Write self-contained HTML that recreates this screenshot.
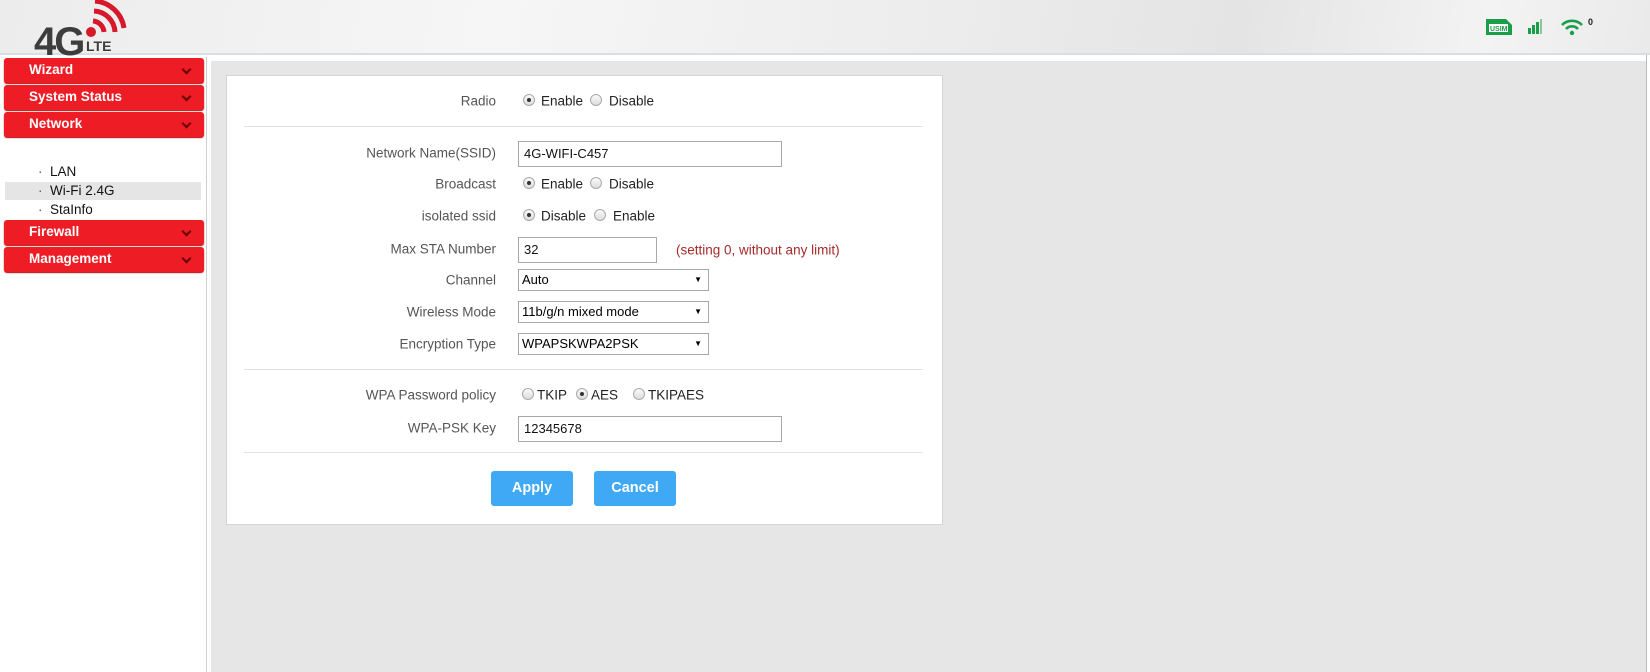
<!DOCTYPE html>
<html><head><meta charset="utf-8"><style>
*{box-sizing:border-box;margin:0;padding:0}
body{width:1650px;height:672px;overflow:hidden;background:#fff;font-family:"Liberation Sans",Arial,sans-serif;position:relative}
.hdr{position:absolute;left:0;top:0;width:1650px;height:55px;background:linear-gradient(100deg,#ececec 0%,#f6f6f6 30%,#ededed 55%,#e4e4e4 75%,#f3f3f3 90%,#eaeaea 100%);border-bottom:2px solid #d6dfe3}
.side{position:absolute;left:0;top:57px;width:207px;height:615px;border-right:1px solid #cfcfcf;background:#fff}
.btn{position:absolute;left:4px;width:200px;height:25px;background:#ee1c25;border-radius:3px;color:#fff;font-weight:bold;font-size:13.5px;line-height:24px;padding-left:25px;box-shadow:0 1px 1px #b00}
.btn:after{content:"";position:absolute;right:14px;top:8px;width:5px;height:5px;border-right:2px solid #600;border-bottom:2px solid #600;transform:rotate(45deg)}
.sub{position:absolute;left:5px;width:196px;height:18px;font-size:13.5px;color:#111;line-height:18px;padding-left:45px}
.sub:before{content:"·";position:absolute;left:33px;color:#555}
.main{position:absolute;left:211px;top:61px;width:1435px;height:611px;background:#e6e6e6}
.vline{position:absolute;left:1646px;top:55px;width:1px;height:617px;background:#bbb}
.card{position:absolute;left:226px;top:75px;width:717px;height:450px;background:#fff;border:1px solid #d5d5d5}
.lbl{position:absolute;right:1154px;font-size:13.5px;color:#555;white-space:nowrap;transform:translateY(-50%)}
.sep{position:absolute;left:244px;width:679px;height:1px;background:#e2e2e2}
.r{position:absolute;width:12px;height:12px;border-radius:50%;border:1px solid #aaa;background:linear-gradient(#fafafa,#ddd);transform:translate(-50%,-50%)}
.r.on:after{content:"";position:absolute;left:3px;top:3px;width:4px;height:4px;border-radius:50%;background:#333}
.t{position:absolute;font-size:13.5px;color:#222;transform:translateY(-50%);white-space:nowrap}
.inp{position:absolute;left:518px;height:26px;border:1px solid #a9a9a9;font-size:13px;line-height:24px;padding-left:5px;color:#111;background:#fff}
.sel{position:absolute;left:518px;width:191px;height:22px;border:1px solid #a9a9a9;font-size:13px;line-height:20px;padding-left:3px;color:#000;background:#fff}
.sel:after{content:"▼";position:absolute;right:6px;top:0;font-size:8px}
.ab{position:absolute;top:471px;width:82px;height:35px;background:#3fa9f5;border-radius:3px;color:#fff;font-weight:bold;font-size:14.5px;text-align:center;line-height:35px}
</style></head><body>
<div class="hdr">
<svg style="position:absolute;left:34px;top:0" width="100" height="56" viewBox="0 0 100 56">
<text x="0" y="55" font-family="Liberation Sans" font-weight="bold" font-size="40" fill="#3d3d3d" letter-spacing="-2">4G</text>
<text x="52" y="51" font-family="Liberation Sans" font-weight="bold" font-size="14" fill="#3d3d3d">LTE</text>
<circle cx="57" cy="32" r="5" fill="#d7182a"/>
<path d="M59 21 A12 12 0 0 1 70 32" stroke="#d7182a" stroke-width="5" fill="none"/>
<path d="M60 11 A22 22 0 0 1 81 32" stroke="#d7182a" stroke-width="5" fill="none"/>
<path d="M61 1 A32 32 0 0 1 90 28" stroke="#d7182a" stroke-width="5" fill="none"/>
</svg>
<svg style="position:absolute;left:1485px;top:18px" width="28" height="18" viewBox="0 0 28 18"><path d="M1 1H21L27 7V17H1Z" fill="#1a9e48"/><rect x="4" y="6" width="19" height="8" fill="#fff"/><text x="5" y="13" font-size="7" font-weight="bold" font-family="Liberation Sans" fill="#1a9e48">USIM</text></svg>
<svg style="position:absolute;left:1527px;top:19px" width="16" height="16"><rect x="1" y="9" width="3" height="6" fill="#1a9e48"/><rect x="5" y="6" width="3" height="9" fill="#1a9e48"/><rect x="9" y="3" width="3" height="12" fill="#1a9e48"/><rect x="13" y="0" width="2" height="15" fill="#8ac79e"/></svg>
<svg style="position:absolute;left:1560px;top:18px" width="24" height="18" viewBox="0 0 24 18"><path d="M2 7A14 14 0 0 1 22 7" stroke="#1a9e48" stroke-width="2.6" fill="none"/><path d="M6 11A8 8 0 0 1 18 11" stroke="#1a9e48" stroke-width="2.6" fill="none"/><circle cx="12" cy="15" r="2.2" fill="#1a9e48"/></svg>
<div style="position:absolute;left:1588px;top:17px;font-size:9px;font-weight:bold;color:#222">0</div>
</div>
<div class="side">
<div class="btn" style="top:1px">Wizard</div>
<div class="btn" style="top:28px">System Status</div>
<div class="btn" style="top:55px">Network</div>
<div class="sub" style="top:106px">LAN</div>
<div class="sub" style="top:125px;background:#e5e5e5">Wi-Fi 2.4G</div>
<div class="sub" style="top:144px">StaInfo</div>
<div class="btn" style="top:163px">Firewall</div>
<div class="btn" style="top:190px">Management</div>
</div>
<div class="main"></div>
<div class="vline"></div>
<div class="card"></div>

<div class="lbl" style="top:101px">Radio</div>
<div class="r on" style="left:529px;top:100px"></div><div class="t" style="left:541px;top:101px">Enable</div>
<div class="r" style="left:596px;top:100px"></div><div class="t" style="left:609px;top:101px">Disable</div>
<div class="sep" style="top:126px"></div>

<div class="lbl" style="top:153px">Network Name(SSID)</div>
<div class="inp" style="top:141px;width:264px">4G-WIFI-C457</div>
<div class="lbl" style="top:184px">Broadcast</div>
<div class="r on" style="left:529px;top:183px"></div><div class="t" style="left:541px;top:184px">Enable</div>
<div class="r" style="left:596px;top:183px"></div><div class="t" style="left:609px;top:184px">Disable</div>
<div class="lbl" style="top:216px">isolated ssid</div>
<div class="r on" style="left:529px;top:215px"></div><div class="t" style="left:541px;top:216px">Disable</div>
<div class="r" style="left:600px;top:215px"></div><div class="t" style="left:613px;top:216px">Enable</div>
<div class="lbl" style="top:249px">Max STA Number</div>
<div class="inp" style="top:237px;width:139px">32</div>
<div class="t" style="left:676px;top:250px;color:#a52a2a">(setting 0, without any limit)</div>
<div class="lbl" style="top:280px">Channel</div>
<div class="sel" style="top:269px">Auto</div>
<div class="lbl" style="top:312px">Wireless Mode</div>
<div class="sel" style="top:301px">11b/g/n mixed mode</div>
<div class="lbl" style="top:344px">Encryption Type</div>
<div class="sel" style="top:333px">WPAPSKWPA2PSK</div>
<div class="sep" style="top:369px"></div>
<div class="lbl" style="top:395px">WPA Password policy</div>
<div class="r" style="left:528px;top:394px"></div><div class="t" style="left:537px;top:395px">TKIP</div>
<div class="r on" style="left:582px;top:394px"></div><div class="t" style="left:591px;top:395px">AES</div>
<div class="r" style="left:639px;top:394px"></div><div class="t" style="left:648px;top:395px">TKIPAES</div>
<div class="lbl" style="top:428px">WPA-PSK Key</div>
<div class="inp" style="top:416px;width:264px">12345678</div>
<div class="sep" style="top:452px"></div>
<div class="ab" style="left:491px">Apply</div>
<div class="ab" style="left:594px">Cancel</div>
</body></html>
